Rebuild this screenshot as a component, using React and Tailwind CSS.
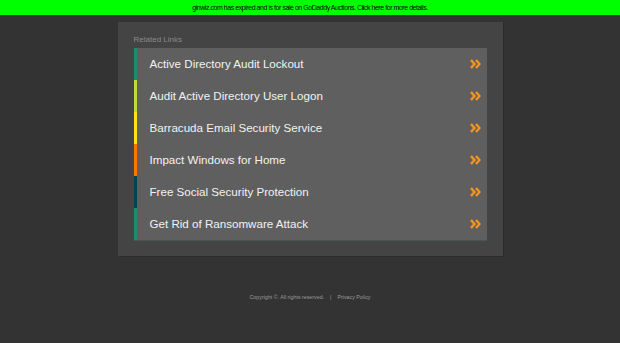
const links = [
  { label: 'Active Directory Audit Lockout', bar: 'border-[#1f8a70]' },
  { label: 'Audit Active Directory User Logon', bar: 'border-[#bedb39]' },
  { label: 'Barracuda Email Security Service', bar: 'border-[#ffe11a]' },
  { label: 'Impact Windows for Home', bar: 'border-[#fd7400]' },
  { label: 'Free Social Security Protection', bar: 'border-[#004358]' },
  { label: 'Get Rid of Ransomware Attack', bar: 'border-[#1f8a70]' },
]

function Chevrons() {
  return (
    <svg width="11" height="10" viewBox="0 0 11 10" className="shrink-0">
      <path d="M1 1l3.5 4L1 9M6 1l3.5 4L6 9" fill="none" stroke="#f39420" strokeWidth="2.4" strokeLinejoin="miter" />
    </svg>
  )
}

export default function App() {
  return (
    <div className="min-h-[343px] bg-[#333333] font-['Liberation_Sans',Arial,sans-serif]">
      <div className="h-[15px] bg-[#00ff00] text-center text-[7px] leading-[15px] tracking-[-0.45px] text-black">
        ginwiz.com has expired and is for sale on GoDaddy Auctions. Click here for more details.
      </div>

      <div className="mx-auto mt-[7px] w-[385px] bg-[#444444] px-4 pt-[11px] pb-[15px] shadow-[1px_1px_0_#2b2b2b]">
        <div className="mb-[2px] text-[8px] leading-[13px] text-[#8a8a8a]">Related Links</div>
        <ul className="border-b border-[#4a5555]">
          {links.map((l) => (
            <li
              key={l.label}
              className={`flex h-8 items-center justify-between border-l-[3px] bg-[#5f5f5f] pl-[13px] pr-[6px] ${l.bar}`}
            >
              <span className="mt-[-1px] text-[11.6px] text-[#f2f2f2]">{l.label}</span>
              <Chevrons />
            </li>
          ))}
        </ul>
      </div>

      <div className="mt-[38px] text-center text-[5.3px] text-[#9a9a9a]">
        Copyright ©. All rights reserved.
        <span className="mx-[6px]">|</span>
        Privacy Policy
      </div>
    </div>
  )
}
